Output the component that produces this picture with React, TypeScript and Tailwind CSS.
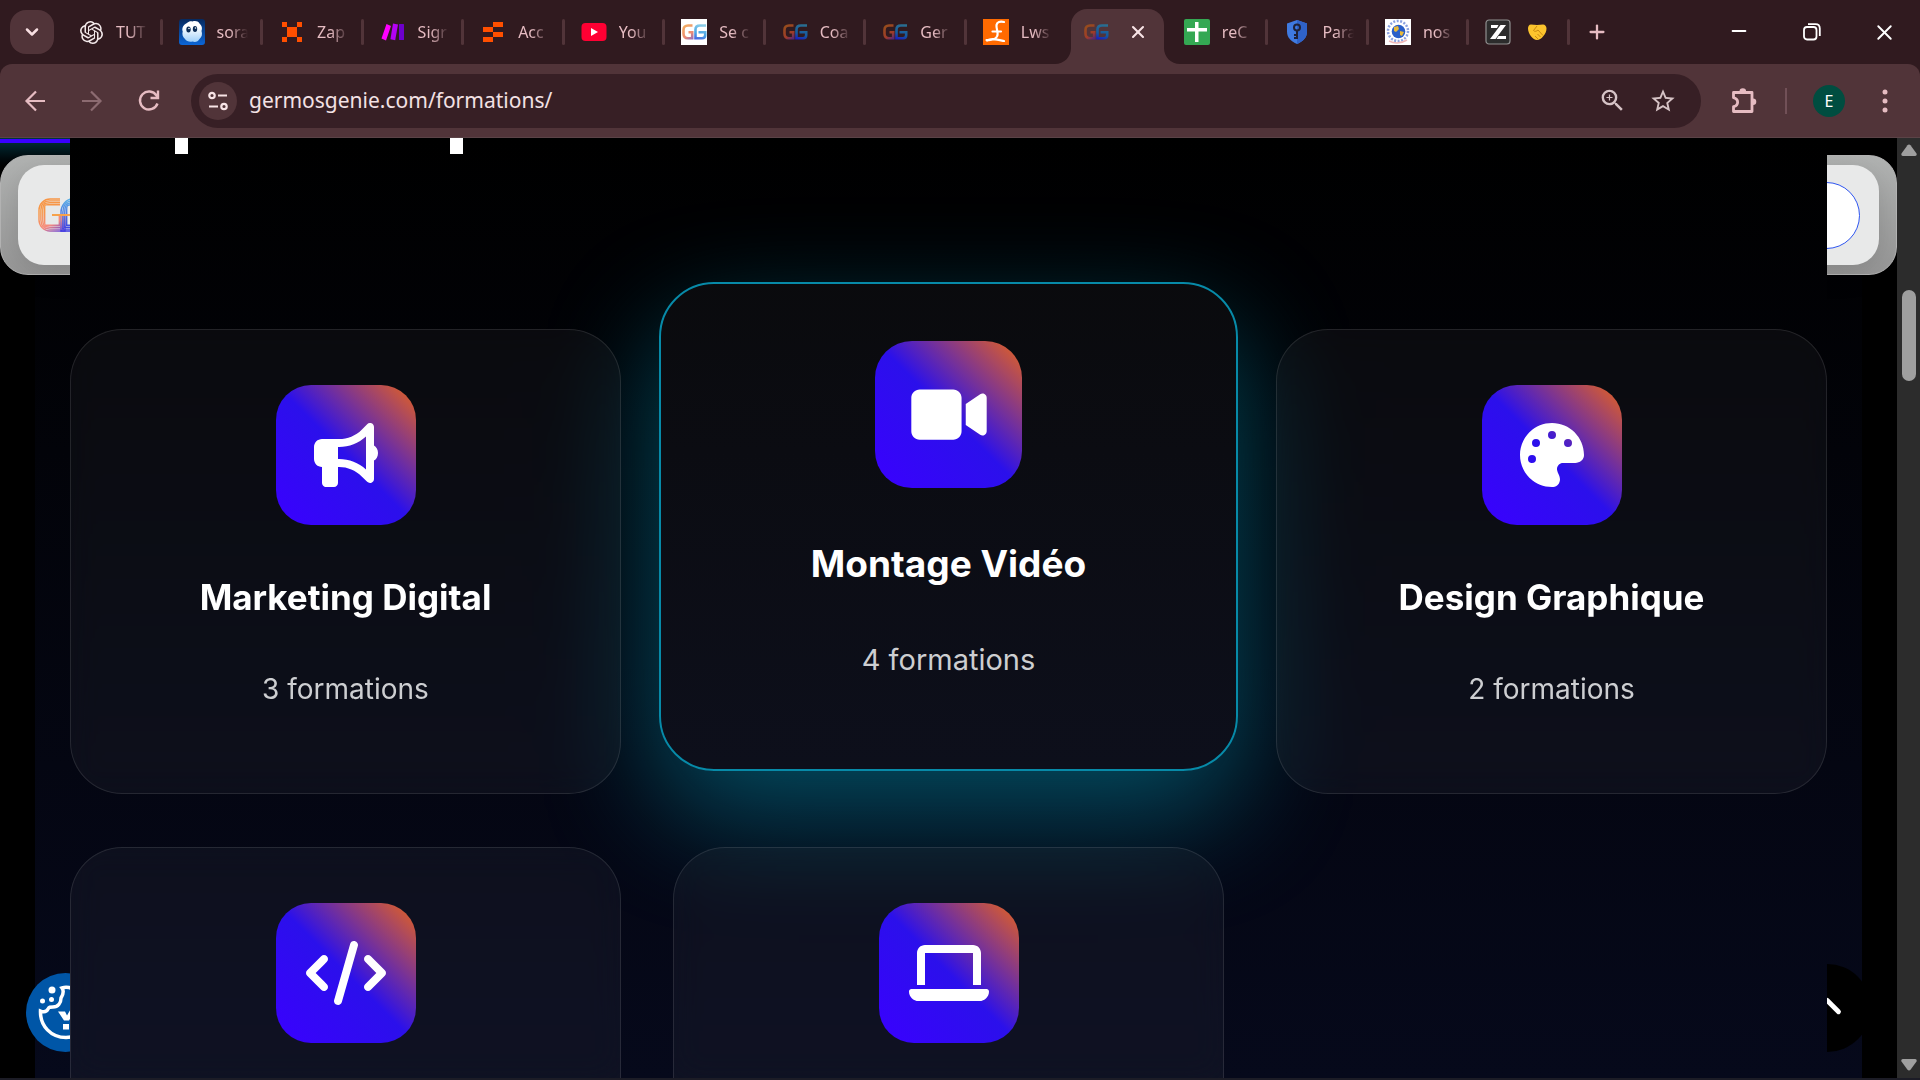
import React from "react";
import clsx from "clsx";
import {
  FaBullhorn,
  FaCode,
  FaLaptop,
  FaPalette,
  FaVideo,
} from "react-icons/fa6";
import { SiOpenai } from "react-icons/si";
import { MdStarBorder, MdZoomIn } from "react-icons/md";
import { ChevronDown, ChevronUp, Minus, Plus, X } from "lucide-react";

type BrowserTab = {
  id: number;
  title: string;
  icon: React.ReactNode;
  active?: boolean;
};

type Category = {
  id: number;
  name?: string;
  count?: string;
  icon: React.ElementType;
  featured?: boolean;
};

const GGIcon = ({ id, light = false }: { id: string; light?: boolean }) => (
  <svg viewBox="0 0 26 26" className="size-[26px]" fill="none">
    {light && <rect width="26" height="26" fill="#fff" />}
    <defs>
      <linearGradient id={`${id}-a`} gradientUnits="userSpaceOnUse" x1="2" y1="5" x2="14" y2="21">
        <stop offset="0" stopColor={light ? "#f2b35f" : "#94501a"} />
        <stop offset="0.6" stopColor={light ? "#ee8a72" : "#a03c28"} />
        <stop offset="1" stopColor={light ? "#6f63d8" : "#2c1ca0"} />
      </linearGradient>
      <linearGradient id={`${id}-b`} gradientUnits="userSpaceOnUse" x1="20" y1="5" x2="15" y2="21">
        <stop offset="0" stopColor={light ? "#8fd0e8" : "#2a6f90"} />
        <stop offset="0.6" stopColor={light ? "#4aa3e4" : "#155aa0"} />
        <stop offset="1" stopColor={light ? "#4a5be0" : "#1c14c0"} />
      </linearGradient>
    </defs>
    <path
      d="M11.500 6.500H7C4 6.500 2.500 8 2.500 11V14.500C2.500 17.500 4 19.200 7 19.200H11.200V13.200H7.500"
      stroke={`url(#${id}-a)`}
      strokeWidth="2.600"
    />
    <path
      d="M25 6.500H19C16 6.500 14.500 8 14.500 10.500V19.200H21C23 19.200 24.200 18 24.200 16V13.200H17.500"
      stroke={`url(#${id}-b)`}
      strokeWidth="2.600"
    />
  </svg>
);

const PixelIcon = ({ rects }: { rects: number[][] }) => (
  <svg viewBox="0 0 22 22" className="size-[22px]" fill="#ff4f00">
    {rects.map(([x, y, w, h]) => (
      <rect key={`${x}-${y}`} x={x} y={y} width={w} height={h} />
    ))}
  </svg>
);

const GhostIcon = () => (
  <svg viewBox="0 0 26 26" className="size-[26px]">
    <defs>
      <linearGradient id="ghost-bg" x1="0" y1="0" x2="0" y2="1">
        <stop offset="0" stopColor="#06295e" />
        <stop offset="1" stopColor="#0b66d8" />
      </linearGradient>
      <linearGradient id="ghost-body" x1="0" y1="0" x2="0" y2="1">
        <stop offset="0.3" stopColor="#fff" />
        <stop offset="1" stopColor="#9fd0fa" />
      </linearGradient>
    </defs>
    <rect width="26" height="26" rx="3" fill="url(#ghost-bg)" />
    <path
      d="M8 4c2-2 4-2 5.500-1.500C16 1.500 19 2 20.500 4.500c2.500 2 3 5 2 7.500 1 3 .5 6-2 8-1.500 2.500-4 3.500-7 2.500-3 .8-6-.2-7.500-2.500-2.500-2-3-5-2.300-7.500C2.500 9 4.500 5.500 8 4z"
      fill="url(#ghost-body)"
    />
    <ellipse cx="9.500" cy="10.500" rx="2.200" ry="3" fill="#0a2b55" />
    <ellipse cx="16" cy="10" rx="2.200" ry="3" fill="#0a2b55" />
    <circle cx="10" cy="9.500" r="0.800" fill="#fff" />
    <circle cx="16.500" cy="9" r="0.800" fill="#fff" />
  </svg>
);

const BarsIcon = () => (
  <svg viewBox="0 0 24 24" className="size-6">
    <path d="M5.500 4l4.500 2L5 20.500 0.500 18.500z" fill="#ff00ff" />
    <path d="M12 3.500l5 .9-2.800 15.800-4.800-.9z" fill="#b402f5" />
    <rect x="18" y="4" width="5" height="16" rx="0.500" fill="#6d00cc" />
  </svg>
);

const YoutubeIcon = () => (
  <svg viewBox="0 0 26 26" className="size-[26px]">
    <rect x="0.500" y="4" width="25" height="18" rx="4" fill="#ff0033" />
    <path d="M10 9l7 4-7 4z" fill="#fff" />
  </svg>
);

const LwsIcon = () => (
  <svg viewBox="0 0 26 26" className="size-[26px]" fill="none">
    <rect width="26" height="26" fill="#ff6a00" />
    <path
      d="M21 3c-4-1-7 0-7.500 3-.5 4 2.500 8 .5 11.500C12 20.500 8 21.500 3.500 21M9.500 12.500h8.500M4 21.500c4-2.500 8-1.500 17 .5"
      stroke="#fff"
      strokeWidth="2.200"
      strokeLinecap="round"
    />
  </svg>
);

const SheetIcon = () => (
  <svg viewBox="0 0 26 26" className="size-[26px]">
    <rect width="26" height="26" rx="2" fill="#34a853" />
    <path d="M11 3h3.500v6H23v3.500h-8.500V23H11V12.500H3V9h8z" fill="#fff" />
  </svg>
);

const ShieldIcon = () => (
  <svg viewBox="0 0 24 26" className="h-[26px] w-6" fill="none">
    <path d="M12 1l10 3.500v8c0 6-4 10-10 12.500C6 22.500 2 18.500 2 12.500v-8z" fill="#3f7ae0" />
    <path d="M12 1l10 3.500v8c0 6-4 10-10 12.500z" fill="#2f62c8" />
    <circle cx="12" cy="8.500" r="3" stroke="#1f2238" strokeWidth="2" />
    <path d="M12 11.500V20M12 16h-3M12 19h-3" stroke="#1f2238" strokeWidth="2" />
  </svg>
);

const GlobeIcon = () => (
  <svg viewBox="0 0 26 26" className="size-[26px]" fill="none">
    <rect width="26" height="26" fill="#fff" />
    <circle cx="13" cy="12" r="10" stroke="#8ba2e0" strokeWidth="2.500" strokeDasharray="2 1.500" />
    <circle cx="13.500" cy="12.500" r="6.800" fill="#2a5fc8" />
    <path d="M9 8l4-1 1 3-3 3-2-1zM15 12l4 1-2 4-2-1z" fill="#e8b93a" />
    <path d="M4 22c6 3 13 2 18-1" stroke="#f0b8b8" strokeWidth="1.500" />
  </svg>
);

const ZIcon = () => (
  <svg viewBox="0 0 26 26" className="size-[26px]">
    <rect x="1" y="1" width="24" height="24" rx="3" fill="#2c2c2c" stroke="#8f8f8f" strokeWidth="1.200" />
    <path d="M6 6h7.500L12 9H6zM15.500 6H21L10.500 20H5zM13.500 17H21v3h-9.500z" fill="#fff" />
  </svg>
);

const HandshakeIcon = () => (
  <svg viewBox="0 0 20 18" className="h-[18px] w-5">
    <path
      d="M1 5.500C1 3.500 2 1.500 4 1.500l6 .5 6-.5c2 0 3.500 2 3.500 4 0 3-1 5-3.500 8-1.500 2-4 3.500-6 3.500-4 0-9-6-9-11.500z"
      fill="#fcc42d"
    />
    <path d="M10 3L6.500 7.500c1.500 1.500 3 .8 4.500-.5l5 5.500M8 13l3 3M10.500 11l3 3" stroke="#c98a12" fill="none" />
  </svg>
);

const tabs: BrowserTab[] = [
  { id: 1, title: "TUT", icon: <SiOpenai size={23} color="#f3e9ea" /> },
  { id: 2, title: "sora", icon: <GhostIcon /> },
  {
    id: 3,
    title: "Zap",
    icon: (
      <PixelIcon
        rects={[[1, 1, 5, 5], [16, 1, 5, 5], [6, 6, 10, 10], [1, 16, 5, 5], [16, 16, 5, 5]]}
      />
    ),
  },
  { id: 4, title: "Sigr", icon: <BarsIcon /> },
  {
    id: 5,
    title: "Acc",
    icon: (
      <PixelIcon
        rects={[[11, 1, 10, 5], [1, 6, 10, 5], [11, 11, 10, 5], [1, 16, 10, 5]]}
      />
    ),
  },
  { id: 6, title: "You", icon: <YoutubeIcon /> },
  { id: 7, title: "Se c", icon: <GGIcon id="gg7" light /> },
  { id: 8, title: "Coa", icon: <GGIcon id="gg8" /> },
  { id: 9, title: "Ger", icon: <GGIcon id="gg9" /> },
  { id: 10, title: "Lws", icon: <LwsIcon /> },
  { id: 11, title: "", icon: <GGIcon id="gg11" />, active: true },
  { id: 12, title: "reC", icon: <SheetIcon /> },
  { id: 13, title: "Para", icon: <ShieldIcon /> },
  { id: 14, title: "nos", icon: <GlobeIcon /> },
  { id: 15, title: "", icon: <ZIcon /> },
];

const categories: Category[] = [
  { id: 1, name: "Marketing Digital", count: "3 formations", icon: FaBullhorn },
  { id: 2, name: "Montage Vidéo", count: "4 formations", icon: FaVideo, featured: true },
  { id: 3, name: "Design Graphique", count: "2 formations", icon: FaPalette },
  { id: 4, icon: FaCode },
  { id: 5, icon: FaLaptop },
];

const Tab = ({ tab, last }: { tab: BrowserTab; last: boolean }) => {
  if (tab.active) {
    return (
      <div className="relative flex h-[55px] self-end">
        <div className="mr-1 ml-1 flex flex-1 items-center justify-between rounded-t-2xl bg-[#513439] pr-4 pl-3 pb-[9px]">
          {tab.icon}
          <button aria-label="Fermer l'onglet" className="text-[#f8e4e6]">
            <X size={20} strokeWidth={2.5} />
          </button>
        </div>
        <svg viewBox="0 0 16 16" className="absolute bottom-0 -left-3 size-4" fill="#513439">
          <path d="M16 0v16H0C9 16 16 9 16 0z" />
        </svg>
        <svg viewBox="0 0 16 16" className="absolute -right-3 bottom-0 size-4" fill="#513439">
          <path d="M0 0v16h16C7 16 0 9 0 0z" />
        </svg>
      </div>
    );
  }
  return (
    <div className="flex items-center gap-3 pl-4">
      <span className="flex w-[26px] shrink-0 justify-center">{tab.icon}</span>
      {last ? (
        <span className="flex flex-1 pl-1">
          <HandshakeIcon />
        </span>
      ) : (
        <span className="min-w-0 flex-1 text-base whitespace-nowrap mask-r-from-40% mask-r-to-100%">
          {tab.title}
        </span>
      )}
      <span
        className={clsx(
          "h-[26px] w-[3px] shrink-0 rounded-full",
          tab.id === 10 ? "bg-transparent" : "bg-[#513439]",
        )}
      />
    </div>
  );
};

const TabStrip = () => (
  <div className="flex h-16 shrink-0 items-center bg-[#301a1f] pl-[10px] text-[#e6bcc2]">
    <button
      aria-label="Rechercher dans les onglets"
      className="flex size-11 shrink-0 items-center justify-center rounded-2xl bg-[#513439] text-[#f8dfe2]"
    >
      <ChevronDown size={20} strokeWidth={3} />
    </button>
    <div className="ml-2 grid max-w-[1508px] flex-1 grid-cols-15 items-center self-stretch">
      {tabs.map((tab, index) => (
        <Tab key={tab.id} tab={tab} last={index === tabs.length - 1} />
      ))}
    </div>
    <button aria-label="Nouvel onglet" className="ml-4">
      <Plus size={22} strokeWidth={2.5} />
    </button>
    <div className="ml-auto flex text-white">
      <button aria-label="Réduire" className="flex w-[73px] justify-center">
        <Minus size={22} />
      </button>
      <button aria-label="Restaurer" className="flex w-[73px] items-center justify-center">
        <svg viewBox="0 0 18 18" className="size-[18px]" fill="none" stroke="currentColor" strokeWidth="1.800">
          <rect x="1" y="4" width="12.500" height="12.500" rx="3" />
          <path d="M5 1.200h7.500c2.500 0 4.300 1.800 4.300 4.300V13" />
        </svg>
      </button>
      <button aria-label="Fermer" className="flex w-[72px] justify-center">
        <X size={25} strokeWidth={1.8} />
      </button>
    </div>
  </div>
);

const Toolbar = () => (
  <div className="bg-[#301a1f]">
    <div className="flex h-[74px] items-center rounded-t-xl border-b border-[#5b4347] bg-[#513439] text-[#e6bcc2]">
      <div className="flex gap-[33px] pl-[23px]">
        <button aria-label="Retour">
          <svg viewBox="0 0 24 24" className="size-6" fill="none" stroke="currentColor" strokeWidth="2.200">
            <path d="M22 12H4M13 2.500L3.500 12l9.500 9.500" />
          </svg>
        </button>
        <button aria-label="Avancer" className="text-[#8c6b71]">
          <svg viewBox="0 0 24 24" className="size-6" fill="none" stroke="currentColor" strokeWidth="2.200">
            <path d="M2 12h18M11 2.500l9.500 9.500-9.500 9.500" />
          </svg>
        </button>
        <button aria-label="Actualiser">
          <svg viewBox="0 0 24 24" className="size-6" fill="none" stroke="currentColor" strokeWidth="2.400">
            <path d="M20.500 14.500A9 9 0 1 1 19.500 6.500L21 8.500M21 1.500v7.500h-7.500" />
          </svg>
        </button>
      </div>
      <div className="ml-[30px] flex h-[54px] flex-1 items-center rounded-full bg-[#371f25] pr-6 pl-2">
        <button
          aria-label="Informations sur le site"
          className="flex size-[38px] items-center justify-center rounded-full bg-[#513439] text-[#f8e4e6]"
        >
          <svg viewBox="0 0 20 20" className="size-5" fill="none" stroke="currentColor" strokeWidth="2.200">
            <circle cx="4" cy="4.500" r="2.700" />
            <path d="M10 4.500h9M1 15.500h9" />
            <circle cx="16" cy="15.500" r="2.700" />
          </svg>
        </button>
        <input
          type="text"
          aria-label="Adresse"
          defaultValue="germosgenie.com/formations/"
          className="ml-3 flex-1 bg-transparent text-[21px] text-[#f3e1e4] outline-none"
        />
        <button aria-label="Zoom" className="mr-[22px] text-[#d6c3c6]">
          <MdZoomIn size={29} />
        </button>
        <button aria-label="Ajouter aux favoris" className="text-[#d6c3c6]">
          <MdStarBorder size={28} />
        </button>
      </div>
      <button aria-label="Extensions" className="ml-7">
        <svg viewBox="0 0 30 30" className="size-[30px]" fill="none" stroke="currentColor" strokeWidth="2.800">
          <path d="M4.500 6.500h18.500v19H4.500v-4.800c5.500-1.500 5.500-7.500 0-9z" strokeLinejoin="round" />
          <path d="M10.500 5.500a3.300 3.300 0 0 1 6.600 0zM24 12.500a3.300 3.300 0 0 1 0 6.600z" fill="currentColor" stroke="none" />
        </svg>
      </button>
      <span className="mx-[26px] h-[26px] w-[2px] bg-[#715057]" />
      <button
        aria-label="Profil"
        className="flex size-8 items-center justify-center rounded-full bg-[#004d40] text-base text-white"
      >
        E
      </button>
      <button aria-label="Menu" className="mr-8 ml-[37px]">
        <svg viewBox="0 0 6 24" className="h-6 w-[6px]" fill="currentColor">
          <circle cx="3" cy="3" r="2.500" />
          <circle cx="3" cy="12" r="2.500" />
          <circle cx="3" cy="21" r="2.500" />
        </svg>
      </button>
    </div>
  </div>
);

const Logo = () => (
  <svg viewBox="0 0 66 34" className="h-[34px] w-[66px]" fill="none">
    <defs>
      <linearGradient id="logo-a" gradientUnits="userSpaceOnUse" x1="6" y1="0" x2="24" y2="34">
        <stop offset="0.3" stopColor="#f79646" />
        <stop offset="0.7" stopColor="#f58a80" />
        <stop offset="1" stopColor="#5a3fe0" />
      </linearGradient>
      <linearGradient id="logo-b" gradientUnits="userSpaceOnUse" x1="0" y1="0" x2="0" y2="34">
        <stop offset="0" stopColor="#5ab4e6" />
        <stop offset="1" stopColor="#3a35e0" />
      </linearGradient>
    </defs>
    {[1, 2.9, 4.8, 6.7].map((d) => (
      <g key={d} strokeWidth="1.400">
        <path
          d={`M22 ${d}H12C6 ${d} ${d} 6 ${d} 12V22C${d} 28 6 ${34 - d} 12 ${34 - d}H${28 - d}V17`}
          stroke="url(#logo-a)"
        />
        <path d={`M60 ${d}H34C28 ${d} ${22 + d} 8 ${22 + d} 14V${34 - d}H60`} stroke="url(#logo-b)" />
      </g>
    ))}
    <path d="M14 17h24" stroke="#f7a24a" strokeWidth="2" />
  </svg>
);

const SiteNav = () => (
  <nav className="absolute inset-x-0 top-[17px] rounded-[28px] border border-[#b5b5b5] bg-linear-to-b from-[#b2b4b3] to-[#979797] px-[17px] py-[9px]">
    <div className="flex h-[100px] items-center justify-between rounded-[26px] bg-[#e8e9e9] pr-[19px] pl-5 shadow-[0_6px_30px_rgba(0,0,0,0.15)]">
      <a href="#accueil" aria-label="Germos Genie">
        <Logo />
      </a>
      <button
        aria-label="Connexion"
        className="h-[67px] w-40 rounded-full border border-[#2e55f0] bg-white"
      />
    </div>
  </nav>
);

const CookieButton = () => (
  <button
    aria-label="Cookies"
    className="absolute bottom-[26px] left-[26px] size-[79px] rounded-full bg-[#0056a7]"
  >
    <svg viewBox="0 0 79 79" className="size-[79px]" fill="none" stroke="#fff" strokeWidth="3.500">
      <path d="M46 15.500C42 14 39 14 36 15c3 4 0 8-1 10 0 5-3 9-8 9-3 0-4 0-5 2-2 4-5 3-7.500 2C14 53 25 64.500 40 64.500c14 0 25-11 25-25" />
      <circle cx="26" cy="17" r="3.500" fill="#fff" stroke="none" />
      <circle cx="16.500" cy="28" r="2.500" fill="#fff" stroke="none" />
      <circle cx="25.500" cy="26.500" r="2.500" fill="#fff" stroke="none" />
      <path d="M32 38.500h7l2 4 4-7h5l-7 12h-5zM37 51h6v5.500h-6z" fill="#fff" stroke="none" />
    </svg>
  </button>
);

const CategoryCard = ({ category }: { category: Category }) => {
  const Icon = category.icon;
  const { featured } = category;

  return (
    <a
      href="#formations"
      className={clsx(
        "flex flex-col items-center",
        featured
          ? "-mx-[14px] -mt-[47px] mb-[23px] rounded-[55px] border-2 border-[#078aa8] bg-white/4 pt-[57px] shadow-[0_42px_115px_rgba(0,205,240,0.36)]"
          : "z-10 min-h-[465px] rounded-[52px] border border-white/10 bg-white/4 pt-[55px] backdrop-blur-lg",
      )}
    >
      <span
        className={clsx(
          "flex items-center justify-center bg-[linear-gradient(45deg,#3a00ff,#2b10eb_50%,#e8641c)] text-white",
          featured ? "size-[147px] rounded-[37px]" : "size-[140px] rounded-[35px]",
        )}
      >
        <Icon className={featured ? "h-[67px] w-[84px]" : "h-16 w-20"} />
      </span>
      {category.name && (
        <h3
          className={clsx(
            "font-bold text-white",
            featured ? "mt-[53px] text-[37px] leading-[46px]" : "mt-[50px] text-[35px] leading-[44px]",
          )}
        >
          {category.name}
        </h3>
      )}
      {category.count && (
        <p
          className={clsx(
            "text-[#cdced1]",
            featured ? "mt-[51px] text-[29px] leading-[44px]" : "mt-[49px] text-[28px] leading-[42px]",
          )}
        >
          {category.count}
        </p>
      )}
    </a>
  );
};

const Scrollbar = () => (
  <div className="flex w-[23px] shrink-0 flex-col items-center bg-[#2c2c2c] pt-[6px] pb-[7px]">
    <svg viewBox="0 0 16 12" className="h-3 w-4" fill="#9f9f9f">
      <path d="M6.500 1.200c.8-1 2.200-1 3 0l6 8.300c.6 1 0 2.500-1.300 2.500H1.800C.5 12 0 10.500.5 9.500z" />
    </svg>
    <span className="mt-[134px] h-[91px] w-[14px] rounded-full bg-[#9f9f9f]" />
    <svg viewBox="0 0 16 12" className="mt-auto h-3 w-4 rotate-180" fill="#9f9f9f">
      <path d="M6.500 1.200c.8-1 2.200-1 3 0l6 8.300c.6 1 0 2.500-1.300 2.500H1.800C.5 12 0 10.500.5 9.500z" />
    </svg>
  </div>
);

const App = () => {
  return (
    <div className="flex h-screen flex-col overflow-hidden bg-black font-['Noto_Sans',sans-serif]">
      <TabStrip />
      <Toolbar />
      <div className="flex min-h-0 flex-1 border-b-2 border-[#1c1c26]">
        <div className="relative flex-1 overflow-hidden bg-black px-[35px] font-['Inter',sans-serif]">
          <div className="h-full bg-[linear-gradient(#000,#06091b)]" />
          {/* reading progress */}
          <div className="absolute top-0 left-0 h-9 w-1/4 bg-linear-to-b from-[#00353f] to-black">
            <div className="mt-px h-1 bg-[#3a00ff]" />
          </div>
          <SiteNav />
          <CookieButton />
          <button
            aria-label="Haut de page"
            className="absolute right-[26px] bottom-[26px] flex size-[88px] items-center justify-center rounded-full bg-black pb-1 text-white"
          >
            <ChevronUp size={46} strokeWidth={2.5} />
          </button>
          <main className="absolute inset-x-[70px] inset-y-0 bg-[linear-gradient(#000,#06091b)]">
            <div className="flex h-[191px] items-start gap-[262px] pl-[105px]">
              <span className="h-4 w-[13px] bg-white" />
              <span className="h-4 w-[13px] bg-white" />
            </div>
            <div className="grid grid-cols-3 gap-x-[52px] gap-y-[53px]">
              {categories.map((category) => (
                <CategoryCard key={category.id} category={category} />
              ))}
            </div>
          </main>
        </div>
        <Scrollbar />
      </div>
    </div>
  );
};

export default App;
